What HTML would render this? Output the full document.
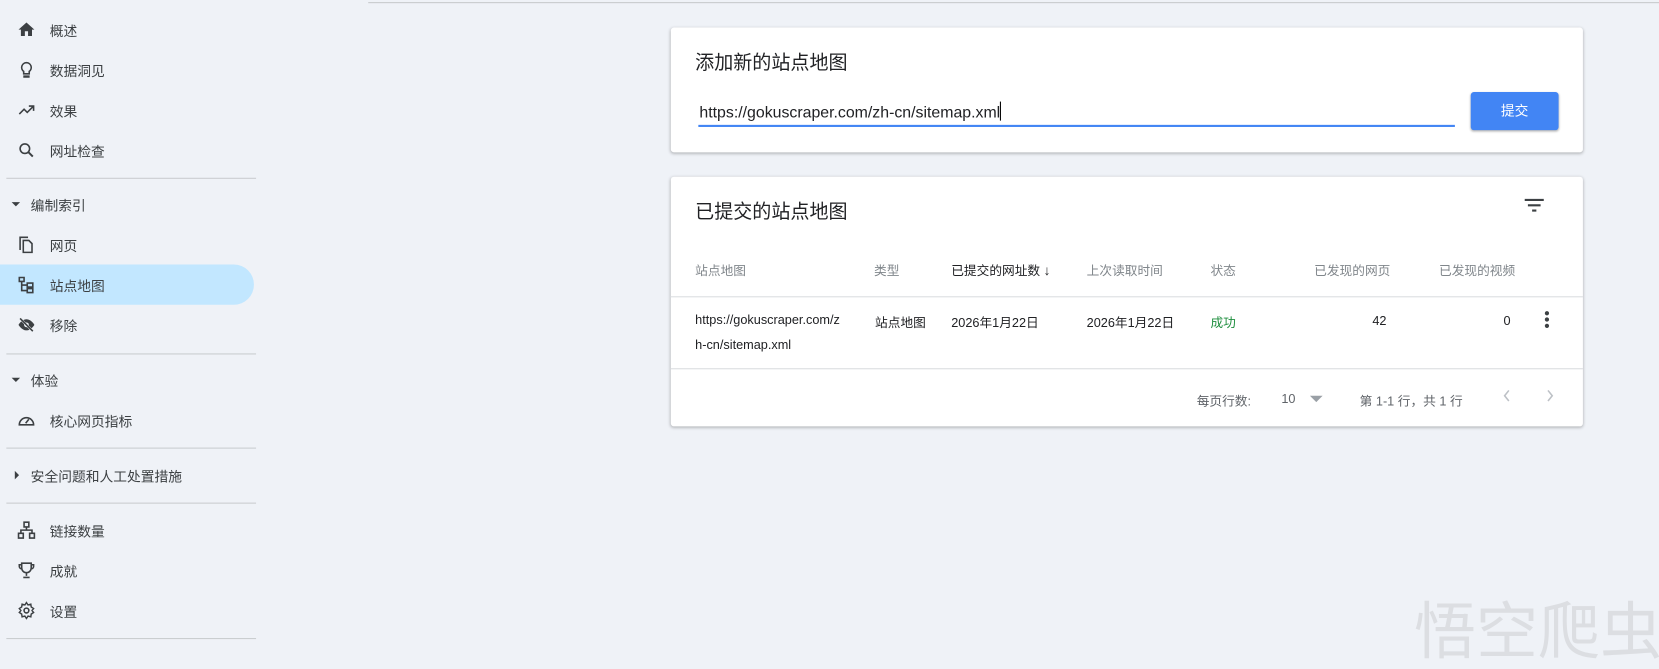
<!DOCTYPE html>
<html><head><meta charset="utf-8"><style>
*{margin:0;padding:0;box-sizing:border-box}
body{width:1659px;height:668px;background:#eff2f7;font-family:"Liberation Sans","Noto Sans CJK SC",sans-serif;color:#202124;position:relative;overflow:hidden}
#w{position:absolute;left:0;top:0;width:1568px;height:632px;transform:scale(1.0581);transform-origin:0 0}
.a{position:absolute}
.nav{font-size:13px;color:#3c4043}
.it{position:absolute;left:0;width:240px;height:38px;display:flex;align-items:center}
.it svg{position:absolute;left:16px}
.it span{position:absolute;left:47px}
.sec span{left:29px}
.hr{position:absolute;left:6px;width:236px;height:1px;background:#c9cccf}
.card{position:absolute;background:#fff;border-radius:3px;box-shadow:0 1px 3px rgba(0,0,0,.3)}
.th{position:absolute;top:80px;font-size:12px;color:#80868b}
.td{position:absolute;top:129px;font-size:12px;color:#202124}
</style></head><body>
<div id="w">
<div class="a" style="left:348px;top:2px;right:0;height:1px;background:#c6c9cc"></div>
<div class="nav">
<div class="it" style="top:9px"><svg width="18" height="18" viewBox="0 0 24 24"><path d="M10 20v-6h4v6h5v-8h3L12 3 2 12h3v8z" fill="#3c4043"/></svg><span>概述</span></div>
<div class="it" style="top:47px"><svg width="18" height="18" viewBox="0 0 24 24"><path d="M9 21h6v-1H9zM12 3a6 6 0 0 0-3.5 10.9V17h7v-3.1A6 6 0 0 0 12 3z" fill="none" stroke="#3c4043" stroke-width="2"/></svg><span>数据洞见</span></div>
<div class="it" style="top:85px"><svg width="18" height="18" viewBox="0 0 24 24"><path d="M3 17l6-6 4 4 8-8M15 7h6v6" fill="none" stroke="#3c4043" stroke-width="2"/></svg><span>效果</span></div>
<div class="it" style="top:123px"><svg width="18" height="18" viewBox="0 0 24 24"><circle cx="10" cy="10" r="6" fill="none" stroke="#3c4043" stroke-width="2"/><path d="M14.5 14.5L20 20" stroke="#3c4043" stroke-width="2.5"/></svg><span>网址检查</span></div>
<div class="hr" style="top:168px"></div>
<div class="it sec" style="top:174px"><svg width="10" height="10" viewBox="0 0 10 10" style="left:10px"><path d="M1 3h8L5 7z" fill="#3c4043"/></svg><span>编制索引</span></div>
<div class="it" style="top:212px"><svg width="18" height="18" viewBox="0 0 24 24"><path d="M4 19V3h10M8 7h7l4 4v11H8z" fill="none" stroke="#3c4043" stroke-width="2"/></svg><span>网页</span></div>
<div class="it" style="top:250px;background:#c2e7ff;border-radius:0 19px 19px 0"><svg width="18" height="18" viewBox="0 0 24 24"><path d="M3 3h6v5H3zM13 10h7v5h-7zM13 17h7v5h-7zM6 8v11.5h7M6 12.5h7" fill="none" stroke="#3c4043" stroke-width="2"/></svg><span>站点地图</span></div>
<div class="it" style="top:288px"><svg width="18" height="18" viewBox="0 0 24 24"><path d="M2 12s4-7 10-7 10 7 10 7-4 7-10 7S2 12 2 12z" fill="#3c4043"/><circle cx="12" cy="12" r="3" fill="#eff2f7"/><path d="M3 3l18 18" stroke="#eff2f7" stroke-width="3"/><path d="M4 4l16 16" stroke="#3c4043" stroke-width="2"/></svg><span>移除</span></div>
<div class="hr" style="top:334px"></div>
<div class="it sec" style="top:340px"><svg width="10" height="10" viewBox="0 0 10 10" style="left:10px"><path d="M1 3h8L5 7z" fill="#3c4043"/></svg><span>体验</span></div>
<div class="it" style="top:378px"><svg width="18" height="18" viewBox="0 0 24 24"><path d="M3 18a9 9 0 1 1 18 0z" fill="none" stroke="#3c4043" stroke-width="2"/><path d="M11 16l4-5" stroke="#3c4043" stroke-width="2"/></svg><span>核心网页指标</span></div>
<div class="hr" style="top:423px"></div>
<div class="it sec" style="top:430px"><svg width="10" height="10" viewBox="0 0 10 10" style="left:11px"><path d="M3 1v8l4-4z" fill="#3c4043"/></svg><span>安全问题和人工处置措施</span></div>
<div class="hr" style="top:475px"></div>
<div class="it" style="top:482px"><svg width="18" height="18" viewBox="0 0 24 24"><path d="M9 2h6v6H9zM2 16h6v6H2zM16 16h6v6h-6zM12 8v4M5 16v-4h14v4" fill="none" stroke="#3c4043" stroke-width="2"/></svg><span>链接数量</span></div>
<div class="it" style="top:520px"><svg width="18" height="18" viewBox="0 0 24 24"><path d="M6 3h12v6a6 6 0 0 1-12 0zM6 5H3v2a3 3 0 0 0 3 3M18 5h3v2a3 3 0 0 1-3 3M12 15v4M8 21h8" fill="none" stroke="#3c4043" stroke-width="2"/></svg><span>成就</span></div>
<div class="it" style="top:558px"><svg width="18" height="18" viewBox="0 0 24 24"><circle cx="12" cy="12" r="3" fill="none" stroke="#3c4043" stroke-width="2"/><path d="M12 2l2 3 3.5-1 .5 3.5 3 2-2 2.5 2 2.5-3 2-.5 3.5-3.5-1-2 3-2-3-3.5 1-.5-3.5-3-2 2-2.5-2-2.5 3-2L6.5 4 10 5z" fill="none" stroke="#3c4043" stroke-width="1.8"/></svg><span>设置</span></div>
<div class="hr" style="top:603px"></div>
</div>

<div class="card" style="left:634px;top:26px;width:862px;height:118px">
<div class="a" style="left:23px;top:19px;font-size:18px;color:#202124">添加新的站点地图</div>
<div class="a" style="left:27px;top:70px;font-size:15px;color:#202124">https://gokuscraper.com/zh-cn/sitemap.xml<span style="display:inline-block;width:1px;height:18px;background:#000;vertical-align:-3px"></span></div>
<div class="a" style="left:26px;top:92px;width:715px;height:2px;background:#4285f4"></div>
<div class="a" style="left:756px;top:61px;width:83px;height:36px;background:#4285f4;border-radius:3px;box-shadow:0 1px 2px rgba(0,0,0,.3);color:#fff;font-size:13px;text-align:center;line-height:36px">提交</div>
</div>

<div class="card" style="left:634px;top:167px;width:862px;height:236px">
<div class="a" style="left:23px;top:19px;font-size:18px">已提交的站点地图</div>
<svg class="a" style="left:806px;top:19px" width="20" height="16" viewBox="0 0 20 16"><path d="M1 3h18M4 8h12M8 13h4" stroke="#3c4043" stroke-width="2"/></svg>
<div class="th" style="left:23px">站点地图</div>
<div class="th" style="left:192px">类型</div>
<div class="th" style="left:265px;color:#202124">已提交的网址数 <span style="font-size:13px">&#8595;</span></div>
<div class="th" style="left:393px">上次读取时间</div>
<div class="th" style="left:510px">状态</div>
<div class="th" style="left:608px">已发现的网页</div>
<div class="th" style="left:726px">已发现的视频</div>
<div class="a" style="left:0;top:113px;width:862px;height:1px;background:#dadce0"></div>
<div class="td" style="left:23px;line-height:24px;top:123px">https://gokuscraper.com/z<br>h-cn/sitemap.xml</div>
<div class="td" style="left:193px">站点地图</div>
<div class="td" style="left:265px">2026年1月22日</div>
<div class="td" style="left:393px">2026年1月22日</div>
<div class="td" style="left:510px;color:#1e8e3e">成功</div>
<div class="td" style="left:663px">42</div>
<div class="td" style="left:787px">0</div>
<svg class="a" style="left:825px;top:126px" width="6" height="18" viewBox="0 0 6 18"><circle cx="3" cy="3" r="2" fill="#3c4043"/><circle cx="3" cy="9" r="2" fill="#3c4043"/><circle cx="3" cy="15" r="2" fill="#3c4043"/></svg>
<div class="a" style="left:0;top:181px;width:862px;height:1px;background:#dadce0"></div>
<div class="a" style="left:497px;top:203px;font-size:12px;color:#5f6368">每页行数:</div>
<div class="a" style="left:577px;top:203px;font-size:12px;color:#5f6368">10</div>
<svg class="a" style="left:604px;top:206px" width="12" height="8"><path d="M0 1h12L6 7z" fill="#9aa0a6"/></svg>
<div class="a" style="left:651px;top:203px;font-size:12px;color:#5f6368">第 1-1 行，共 1 行</div>
<svg class="a" style="left:785px;top:200px" width="10" height="14"><path d="M7 2L3 7l4 5" fill="none" stroke="#bdc1c6" stroke-width="1.5"/></svg>
<svg class="a" style="left:826px;top:200px" width="10" height="14"><path d="M3 2l4 5-4 5" fill="none" stroke="#bdc1c6" stroke-width="1.5"/></svg>
</div>
</div>
<div class="a" style="left:1414px;top:598px;font-size:62px;color:#dcdee2;line-height:70px;white-space:nowrap">悟空爬虫</div>
</body></html>
